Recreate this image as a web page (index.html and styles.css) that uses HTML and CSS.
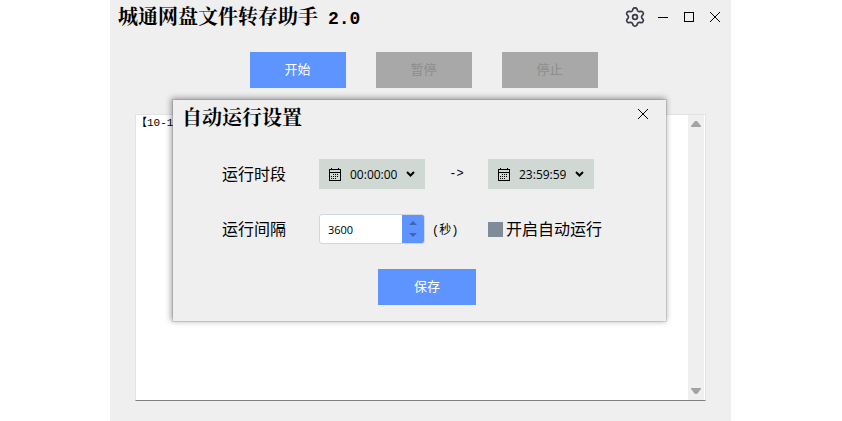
FILE: index.html
```html
<!DOCTYPE html>
<html lang="zh-CN">
<head>
<meta charset="UTF-8">
<meta name="viewport" content="width=device-width, initial-scale=1.0">
<title>城通网盘文件转存助手 2.0</title>
<link rel="stylesheet" href="styles.css">
</head>
<body>
<div class="window">
    <header class="titlebar">
        <h1 class="title">城通网盘文件转存助手<span class="version">2.0</span></h1>
        <div class="window-tools">
            <button class="icon-btn gear" type="button" aria-label="设置">
                <svg width="22" height="22" viewBox="-11 -11 22 22" fill="none" stroke="#3a374a" stroke-width="1.7" stroke-linejoin="round">
                    <path d="M-1.9-8.2Q-1.4-9.2 0-9.2Q1.4-9.2 1.9-8.2L2.5-6.5Q3-5.3 4.4-5.4L6.2-5.7Q7.3-5.8 8-4.6Q8.7-3.4 8.1-2.5L6.9-1.1Q6.1 0 6.9 1.1L8.1 2.5Q8.7 3.4 8 4.6Q7.3 5.8 6.2 5.7L4.4 5.4Q3 5.3 2.5 6.5L1.9 8.2Q1.4 9.2 0 9.2Q-1.4 9.2-1.9 8.2L-2.5 6.5Q-3 5.3-4.4 5.4L-6.2 5.7Q-7.3 5.8-8 4.6Q-8.7 3.4-8.1 2.5L-6.9 1.1Q-6.1 0-6.9-1.1L-8.1-2.5Q-8.7-3.4-8-4.6Q-7.3-5.8-6.2-5.7L-4.4-5.4Q-3-5.3-2.5-6.5Z"/>
                    <circle r="2.4"/>
                </svg>
            </button>
            <button class="icon-btn" type="button" aria-label="最小化">
                <svg width="10" height="10" shape-rendering="crispEdges"><path d="M0 5.5h10" stroke="#000"/></svg>
            </button>
            <button class="icon-btn" type="button" aria-label="最大化">
                <svg width="10" height="10" shape-rendering="crispEdges"><path d="M.5.5h9v9h-9z" fill="none" stroke="#000"/></svg>
            </button>
            <button class="icon-btn" type="button" aria-label="关闭">
                <svg width="10" height="10"><path d="M0 0l10 10M10 0L0 10" stroke="#000"/></svg>
            </button>
        </div>
    </header>

    <div class="actions">
        <button class="btn" type="button">开始</button>
        <button class="btn" type="button" disabled>暂停</button>
        <button class="btn" type="button" disabled>停止</button>
    </div>

    <div class="log">
        <textarea class="log-text" aria-label="日志" readonly>【10-1</textarea>
        <div class="scrollbar">
            <svg width="10" height="6"><path d="M0 6V5L4 0h2l4 5v1z" fill="#a3a3a3"/></svg>
            <svg width="10" height="6"><path d="M0 0v1l4 5h2l4-5V0z" fill="#a3a3a3"/></svg>
        </div>
    </div>

    <section class="dialog" role="dialog" aria-labelledby="dialog-title">
        <header class="dialog-head">
            <h2 class="title" id="dialog-title">自动运行设置</h2>
            <button class="icon-btn" type="button" aria-label="关闭">
                <svg width="10" height="10"><path d="M0 0l10 10M10 0L0 10" stroke="#000"/></svg>
            </button>
        </header>
        <form class="settings">
            <label class="name" for="time-start">运行时段</label>
            <div class="time">
                <svg width="12" height="13" shape-rendering="crispEdges" fill="none" stroke="#000">
                    <path d="M.5 1.5h11v11H.5zM0 4.5h12M2.5 0v2M9.5 0v2"/>
                    <path d="M4 6.5h6M2 8.5h8M2 10.5h6" stroke-dasharray="1 1"/>
                </svg>
                <select id="time-start"><option>00:00:00</option></select>
                <svg width="9" height="6"><path d="M1 1l3.500 3.500L8 1" fill="none" stroke="#000" stroke-width="2"/></svg>
            </div>
            <span class="arrow">-&gt;</span>
            <div class="time">
                <svg width="12" height="13" shape-rendering="crispEdges" fill="none" stroke="#000">
                    <path d="M.5 1.5h11v11H.5zM0 4.5h12M2.5 0v2M9.5 0v2"/>
                    <path d="M4 6.5h6M2 8.5h8M2 10.5h6" stroke-dasharray="1 1"/>
                </svg>
                <select id="time-end" aria-label="结束时间"><option>23:59:59</option></select>
                <svg width="9" height="6"><path d="M1 1l3.500 3.500L8 1" fill="none" stroke="#000" stroke-width="2"/></svg>
            </div>

            <label class="name" for="interval">运行间隔</label>
            <div class="spin">
                <input id="interval" type="text" inputmode="numeric" value="3600">
                <div class="spin-btns">
                    <button type="button" aria-label="增加"><svg width="8" height="4"><path d="M0 4l4-4 4 4z" fill="#4266ae"/></svg></button>
                    <button type="button" aria-label="减少"><svg width="8" height="4"><path d="M0 0l4 4 4-4z" fill="#4266ae"/></svg></button>
                </div>
            </div>
            <span class="unit">(秒)</span>
            <label class="check"><input type="checkbox"><span class="name">开启自动运行</span></label>

            <button class="btn save" type="button">保存</button>
        </form>
    </section>
</div>
</body>
</html>
```

FILE: styles.css
```css
:root{
    --blue:#5e94ff;
    --panel:#efefef;
    --sans:"Open Sans","Noto Sans CJK SC",sans-serif;
    --mono:"Liberation Mono","Noto Sans CJK SC",monospace;
}
*{box-sizing:border-box;margin:0;padding:0;}
body{
    background:#fff;
    color:#000;
    font-family:var(--sans);
    padding:0 111px 0 110px;
}
button,input,select,textarea{
    font-family:inherit;
    border:0;
    border-radius:0;
    background:none;
    color:inherit;
}
svg{display:block;}
.window{
    position:relative;
    display:flex;
    flex-direction:column;
    min-height:100vh;
    padding:0 25px 20px;
    background:var(--panel);
}
.titlebar{
    display:flex;
    align-items:center;
    justify-content:space-between;
    height:34px;
    margin:0 -14px 0 -17px;
}
.title{
    padding-top:2px;
    font:bold 20px/28px "Liberation Serif","Noto Serif CJK SC","Noto Sans CJK SC",serif;
}
.version{
    margin-left:10px;
    font-family:"Liberation Mono",monospace;
    font-size:18px;
}
.window-tools{
    display:flex;
    align-items:center;
    gap:16px;
}
.icon-btn{display:block;}
.gear{margin-right:-4px;}
.actions{
    display:flex;
    justify-content:center;
    gap:30px;
    padding:18px 0 26px 6px;
}
.btn{
    width:96px;
    height:36px;
    background:var(--blue);
    color:#fff;
    font-size:13px;
    line-height:16px;
    padding-bottom:2px;
}
.btn:disabled{
    background:#a8a8a8;
    color:#8d8d8d;
}
/* log area */
.log{
    flex:1;
    display:flex;
    background:#fff;
    border:1px solid #e3e3e3;
    border-bottom-color:#808080;
}
.log-text{
    flex:1;
    resize:none;
    outline:0;
    font:11px/16px var(--mono);
}
.scrollbar{
    display:flex;
    flex-direction:column;
    align-items:center;
    justify-content:space-between;
    width:17px;
    padding:6px 0;
    background:var(--panel);
    border-right:1px solid #fff;
}
/* settings dialog */
.dialog{
    position:absolute;
    top:100px;
    left:63px;
    right:65px;
    background:var(--panel);
    box-shadow:0 0 0 1px rgba(0,0,0,.1),-1px -1px 6px 1px rgba(0,0,0,.36);
}
.dialog-head{
    display:flex;
    align-items:flex-start;
    justify-content:space-between;
    height:34px;
    padding:2px 18px 0 9px;
}
.dialog-head .icon-btn{padding-top:7px;}
.settings{
    display:grid;
    grid-template-columns:97px 106px 63px 1fr;
    row-gap:25px;
    align-items:center;
    padding:25px 34px 16px 49px;
}
.name{
    padding-bottom:2px;
    font-size:16px;
}
.time{
    display:flex;
    align-items:center;
    gap:9px;
    width:106px;
    height:30px;
    padding:0 10px;
    background:#cfd8d2;
}
.time select{
    flex:1;
    min-width:0;
    appearance:none;
    font-size:12px;
}
.arrow{
    text-align:center;
    font:12px var(--mono);
}
.spin{
    display:flex;
    height:30px;
    background:#fff;
    border:1px solid #d0d7dd;
    border-radius:3px;
    overflow:hidden;
}
.spin input{
    flex:1;
    min-width:0;
    padding-left:8px;
    font-size:11px;
}
.spin-btns{
    display:flex;
    flex-direction:column;
    width:22px;
    padding:2px 0;
    background:var(--blue);
}
.spin-btns button{
    flex:1;
    display:flex;
    align-items:center;
    justify-content:center;
}
.unit{
    padding-left:7px;
    font:12px var(--mono);
}
.check{
    display:flex;
    align-items:center;
    gap:3px;
}
.check input{
    appearance:none;
    width:15px;
    height:15px;
    background:#7f8b96;
}
.save{
    grid-column:1 / -1;
    justify-self:center;
    width:98px;
}
```
